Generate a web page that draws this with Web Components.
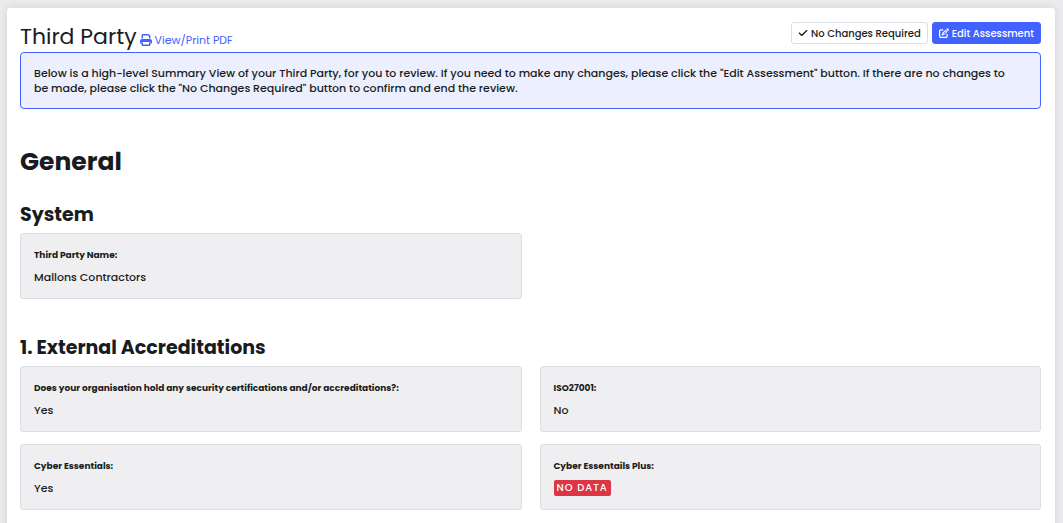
<!DOCTYPE html>
<html lang="en">
<head>
    <meta charset="utf-8">
    <title>Third Party</title>
    <meta name="viewport" content="width=device-width, initial-scale=1">
    <style>
        body {
            margin: 0;
            background-color: #ebebed;
            color: #181c21;
            font: 500 11px/15px Poppins, Inter, sans-serif;
            overflow: hidden;
        }
    </style>
</head>

<body>
    <template id="review-page">
        <style>
            :host {
                display: block;
                box-sizing: border-box;
                min-height: 100vh;
                margin: 8px 8px 0 7px;
                padding: 14px 14px 14px 13px;
                border-radius: 3px 3px 0 0;
                background-color: #fff;
                box-shadow: 0 0 8px #0000001a;
            }
            header {
                display: flex;
                justify-content: space-between;
                align-items: flex-start;
                height: 30px;
            }
            .title {
                display: flex;
                align-items: baseline;
                gap: 3px;
            }
            h1 {
                margin: 0;
                font-size: 22px;
                line-height: 30px;
                font-weight: 400;
            }
            .actions {
                display: flex;
                gap: 4px;
            }
        </style>
        <header>
            <div class="title">
                <h1><slot name="title"></slot></h1>
                <slot name="link"></slot>
            </div>
            <div class="actions"><slot name="actions"></slot></div>
        </header>
        <slot></slot>
    </template>

    <template id="print-link">
        <style>
            :host { display: block; }
            a {
                color: #4262ff;
                font-weight: 400;
                text-decoration: none;
            }
            svg {
                width: 12px;
                height: 12px;
                margin-right: 3px;
                vertical-align: -2px;
                fill: currentColor;
            }
        </style>
        <a href="#print"><svg viewBox="0 0 12 12" aria-hidden="true"><path d="M3 0h5.500L10.500 2v2.500H9V2.500L8 1.500H3v3H1.500V1.500C1.500.7 2.200 0 3 0zM2 5h8c1.100 0 2 .9 2 2v1.500c0 .5-.4 1-1 1h-.5V8h-9v1.500H1c-.6 0-1-.5-1-1V7c0-1.100.9-2 2-2zM1.500 8.500H3v2h6v-2h1.500v2c0 .8-.7 1.500-1.500 1.500H3c-.8 0-1.500-.7-1.500-1.500z"/></svg><slot></slot></a>
    </template>

    <template id="action-button">
        <style>
            :host { display: block; }
            button {
                display: flex;
                align-items: center;
                gap: 3px;
                height: 22px;
                margin: 0;
                padding: 0 6px;
                border: 1px solid #dcdee3;
                border-radius: 3px;
                background-color: #fff;
                color: inherit;
                font: 500 10px/15px Poppins, Inter, sans-serif;
                white-space: nowrap;
                cursor: pointer;
            }
            :host([primary]) button {
                border-color: #4262ff;
                background-color: #4262ff;
                color: #fff;
            }
            svg { width: 10px; height: 10px; fill: currentColor; }
            .edit, :host([primary]) .check { display: none; }
            :host([primary]) .edit { display: block; }
        </style>
        <button type="button">
            <svg class="check" viewBox="0 0 448 512" aria-hidden="true"><path d="M439 105c12 12 12 33 0 45L183 406c-12 12-33 12-45 0L10 278c-12-12-12-33 0-45s33-12 45 0l105 105L393 105c13-12 33-12 46 0z"/></svg>
            <svg class="edit" viewBox="0 0 512 512" aria-hidden="true"><path d="M472 40c-22-22-57-22-79 0l-30 30 98 98 30-30c22-22 22-57 0-79L472 40zM172 242c-6 6-11 13-13 22l-30 88c-3 9-1 18 6 25s16 9 25 6l88-30c9-2 16-7 22-13l168-150-98-98-168 150zm70 18 98-98 30 30-98 98-48 18 18-48zM96 64c-53 0-96 43-96 96v256c0 53 43 96 96 96h256c53 0 96-43 96-96v-96c0-18-14-32-32-32s-32 14-32 32v96c0 18-14 32-32 32H96c-18 0-32-14-32-32V160c0-18 14-32 32-32h96c18 0 32-14 32-32s-14-32-32-32H96z"/></svg>
            <slot></slot>
        </button>
    </template>

    <template id="info-alert">
        <style>
            :host {
                display: block;
                padding: 13px 20px 12px 13px;
                border: 1px solid #4262ff;
                border-radius: 4px;
                background-color: #eceffe;
            }
        </style>
        <slot></slot>
    </template>

    <template id="summary-group">
        <style>
            :host { display: block; margin-top: 37px; }
            h2 {
                margin: 0;
                font-size: 25px;
                line-height: 32px;
                font-weight: 700;
            }
        </style>
        <h2><slot name="heading"></slot></h2>
        <slot></slot>
    </template>

    <template id="summary-section">
        <style>
            :host { display: block; margin-top: 25px; }
            :host(:not(:first-of-type)) { margin-top: 37px; }
            h3 {
                margin: 0 0 7px;
                font-size: 19px;
                line-height: 23px;
                font-weight: 700;
            }
            .grid {
                display: grid;
                grid-template-columns: 1fr 1fr;
                gap: 12px 18px;
            }
        </style>
        <h3><slot name="heading"></slot></h3>
        <div class="grid"><slot></slot></div>
    </template>

    <template id="answer-card">
        <style>
            :host {
                display: block;
                padding: 13px;
                border: 1px solid #dcdee3;
                border-radius: 3px;
                background-color: #efeff1;
            }
            .label {
                margin-bottom: 6px;
                font-size: 9px;
                line-height: 16px;
                font-weight: 700;
            }
            .value { line-height: 16px; }
        </style>
        <div class="label"><slot name="label"></slot></div>
        <div class="value"><slot></slot></div>
    </template>

    <template id="status-badge">
        <style>
            :host {
                display: block;
                width: fit-content;
                padding: 0 3px;
                border-radius: 2px;
                background-color: #dc3545;
                color: #fff;
                font-size: 10px;
                line-height: 16px;
                letter-spacing: 1px;
            }
        </style>
        <slot></slot>
    </template>

    <review-page>
        <span slot="title">Third Party</span>
        <print-link slot="link">View/Print PDF</print-link>
        <action-button slot="actions">No Changes Required</action-button>
        <action-button slot="actions" primary>Edit Assessment</action-button>

        <info-alert>Below is a high-level Summary View of your Third Party, for you to review. If you need to make any changes, please click the "Edit Assessment" button. If there are no changes to be made, please click the "No Changes Required" button to confirm and end the review.</info-alert>

        <summary-group>
            <span slot="heading">General</span>
            <summary-section>
                <span slot="heading">System</span>
                <answer-card><span slot="label">Third Party Name:</span>Mallons Contractors</answer-card>
            </summary-section>
            <summary-section>
                <span slot="heading">1. External Accreditations</span>
                <answer-card><span slot="label">Does your organisation hold any security certifications and/or accreditations?:</span>Yes</answer-card>
                <answer-card><span slot="label">ISO27001:</span>No</answer-card>
                <answer-card><span slot="label">Cyber Essentials:</span>Yes</answer-card>
                <answer-card><span slot="label">Cyber Essentails Plus:</span><status-badge>NO DATA</status-badge></answer-card>
            </summary-section>
        </summary-group>
    </review-page>

    <script>
        class TemplateElement extends HTMLElement {
            constructor() {
                super();
                const template = document.querySelector(`template#${this.localName}`);
                this.attachShadow({ mode: 'open' });
                this.shadowRoot.appendChild(
                    template.content.cloneNode(true)
                );
            }
        }

        class ReviewPage extends TemplateElement {}
        class PrintLink extends TemplateElement {}
        class ActionButton extends TemplateElement {}
        class InfoAlert extends TemplateElement {}
        class SummaryGroup extends TemplateElement {}
        class SummarySection extends TemplateElement {}
        class AnswerCard extends TemplateElement {}
        class StatusBadge extends TemplateElement {}

        customElements.define('review-page', ReviewPage);
        customElements.define('print-link', PrintLink);
        customElements.define('action-button', ActionButton);
        customElements.define('info-alert', InfoAlert);
        customElements.define('summary-group', SummaryGroup);
        customElements.define('summary-section', SummarySection);
        customElements.define('answer-card', AnswerCard);
        customElements.define('status-badge', StatusBadge);
    </script>
</body>
</html>
